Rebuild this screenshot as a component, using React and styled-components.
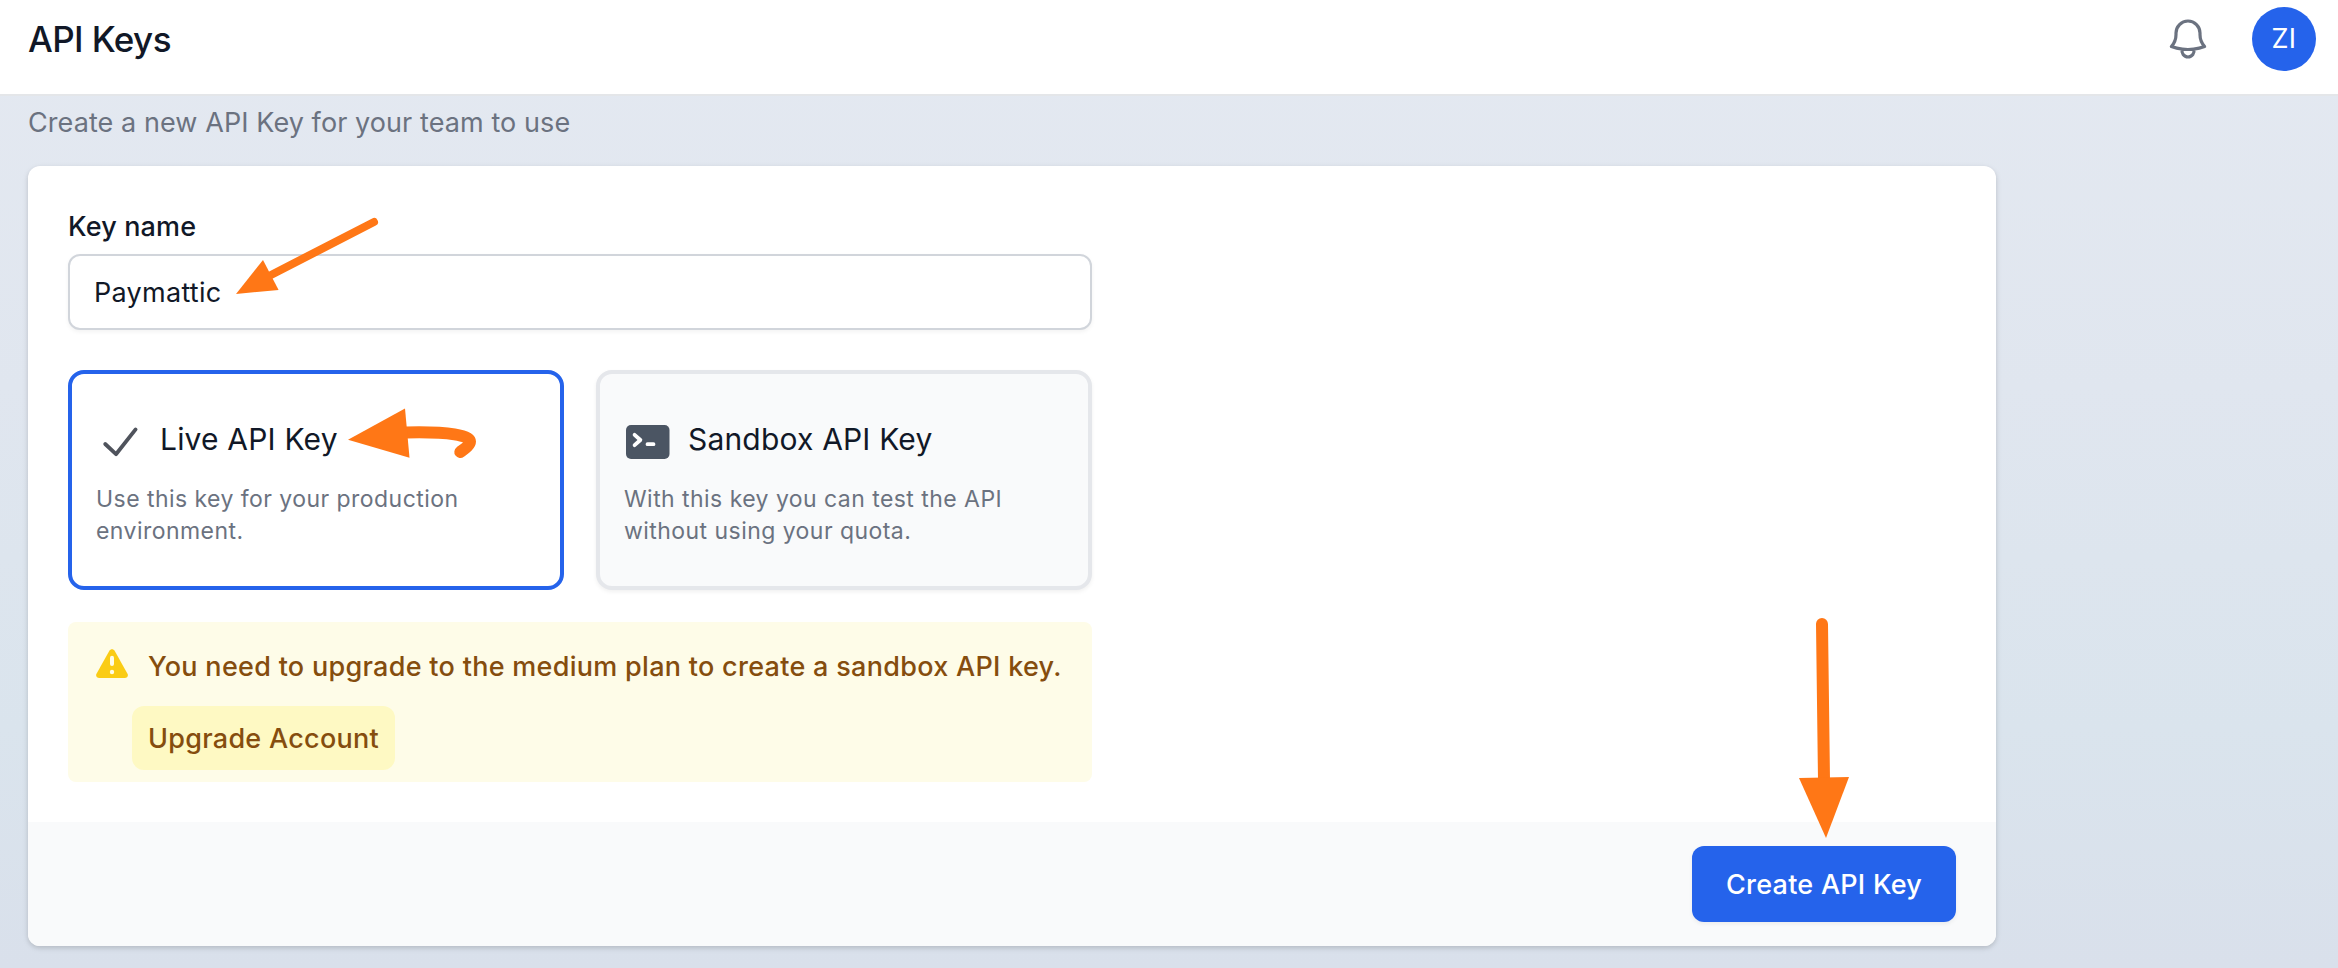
import React from "react";
import styled, { createGlobalStyle } from "styled-components";

const GlobalStyle = createGlobalStyle`
  *, *::before, *::after { box-sizing: border-box; }
  body { margin: 0; font-family: Inter, "Liberation Sans", sans-serif; }
  h1, p { margin: 0; }
  button, input { font-family: inherit; }
`;

const Page = styled.div`
  position: relative;
  width: 2338px;
  height: 968px;
  overflow: hidden;
  background: linear-gradient(180deg, #e4e9f1 0%, #e0e6ef 40%, #dae4ed 75%, #d9e0eb 100%);
`;

const Header = styled.header`
  display: flex;
  align-items: flex-start;
  justify-content: space-between;
  height: 96px;
  padding: 7px 22px 0 28px;
  background: #fff;
  border-bottom: 2px solid #e4e6e9;
`;

const Title = styled.h1`
  font-size: 35px;
  line-height: 64px;
  font-weight: 500;
  letter-spacing: -0.6px;
  color: #111827;
`;

const HeaderActions = styled.div`
  display: flex;
  align-items: center;
  gap: 40px;
`;

const Avatar = styled.div`
  width: 64px;
  height: 64px;
  border-radius: 50%;
  background: #2563eb;
  color: #fff;
  font-size: 27px;
  line-height: 64px;
  letter-spacing: 0.5px;
  text-align: center;
`;

const Main = styled.main`
  padding: 0 0 0 28px;
`;

const Intro = styled.p`
  height: 70px;
  padding-top: 7px;
  font-size: 27px;
  line-height: 40px;
  letter-spacing: 0.08px;
  color: #6b7280;
`;

const Panel = styled.section`
  width: 1968px;
  height: 780px;
  display: flex;
  flex-direction: column;
  border-radius: 12px;
  overflow: hidden;
  background: #fff;
  box-shadow: 0 2px 6px rgba(0, 0, 0, 0.1), 0 2px 4px rgba(0, 0, 0, 0.08);
`;

const PanelBody = styled.div`
  flex: 1;
  width: 1104px;
  padding: 40px;
`;

const Label = styled.label`
  display: block;
  height: 48px;
  font-size: 27px;
  line-height: 42px;
  font-weight: 500;
  letter-spacing: 0.15px;
  color: #111827;
`;

const Input = styled.input`
  display: block;
  width: 1024px;
  height: 76px;
  padding: 0 24px;
  border: 2px solid #d1d5db;
  border-radius: 12px;
  background: #fff;
  box-shadow: 0 2px 4px rgba(0, 0, 0, 0.05);
  font-size: 27px;
  letter-spacing: 0.28px;
  color: #111827;
  outline: none;
`;

const Options = styled.div`
  display: grid;
  grid-template-columns: 1fr 1fr;
  gap: 32px;
  margin-top: 40px;
`;

const Option = styled.div`
  height: 220px;
  padding: 40px 24px 0;
  border: 4px solid ${(p) => (p.$active ? "#2563eb" : "#e5e7eb")};
  border-radius: 16px;
  background: ${(p) => (p.$active ? "#fff" : "#f9fafb")};
  box-shadow: ${(p) => (p.$active ? "none" : "0 2px 4px rgba(0, 0, 0, 0.06)")};
`;

const OptionHead = styled.div`
  display: flex;
  align-items: center;
  gap: 16px;
  height: 48px;
`;

const OptionTitle = styled.div`
  padding-top: 2px;
  font-size: 30px;
  line-height: 48px;
  letter-spacing: 0.18px;
  color: #111827;
`;

const OptionText = styled.p`
  margin-top: 21px;
  font-size: 23px;
  line-height: 32px;
  letter-spacing: 0.45px;
  color: #6b7280;
`;

const Alert = styled.div`
  display: flex;
  gap: 16px;
  height: 160px;
  margin-top: 32px;
  padding: 22px 24px 0;
  border-radius: 8px;
  background: #fefce8;

  svg {
    flex-shrink: 0;
  }
`;

const AlertContent = styled.div`
  display: flex;
  flex-direction: column;
  align-items: flex-start;
`;

const AlertText = styled.p`
  height: 62px;
  font-size: 27px;
  line-height: 46px;
  font-weight: 500;
  letter-spacing: 0.29px;
  white-space: nowrap;
  color: #854d0e;
`;

const UpgradeButton = styled.button`
  width: 263px;
  height: 64px;
  margin-left: -16px;
  padding: 0 16px;
  border: 0;
  border-radius: 12px;
  background: #fef9c3;
  font-size: 27px;
  font-weight: 500;
  letter-spacing: 0.27px;
  text-align: left;
  white-space: nowrap;
  color: #854d0e;
`;

const PanelFooter = styled.footer`
  display: flex;
  justify-content: flex-end;
  height: 124px;
  padding: 24px 40px;
  background: #f9fafb;
`;

const PrimaryButton = styled.button`
  width: 264px;
  height: 76px;
  padding: 0;
  border: 0;
  border-radius: 12px;
  background: #2563eb;
  box-shadow: 0 2px 4px rgba(0, 0, 0, 0.06);
  font-size: 27px;
  font-weight: 500;
  letter-spacing: 0.25px;
  white-space: nowrap;
  color: #fff;
`;

const Annotations = styled.svg`
  position: absolute;
  inset: 0;
  pointer-events: none;
`;

const BellIcon = () => (
  <svg width="48" height="48" viewBox="0 0 24 24" fill="none" stroke="#6b7280" strokeWidth="1.6" strokeLinecap="round" strokeLinejoin="round">
    <path d="M14.857 17.082a23.848 23.848 0 005.454-1.31A8.967 8.967 0 0118 9.75v-.7V9A6 6 0 006 9v.75a8.967 8.967 0 01-2.312 6.022c1.733.64 3.56 1.085 5.455 1.31m5.714 0a24.255 24.255 0 01-5.714 0m5.714 0a3 3 0 11-5.714 0" />
  </svg>
);

const CheckIcon = () => (
  <svg width="48" height="48" viewBox="0 0 48 48" fill="none" stroke="#4f535c" strokeWidth="3.8" strokeLinecap="round" strokeLinejoin="round">
    <path d="M9.2 30L20 40.2L39.6 15.4" />
  </svg>
);

const TerminalIcon = () => (
  <svg width="48" height="48" viewBox="0 0 48 48" fill="none">
    <rect x="2" y="11" width="43.5" height="34" rx="5" fill="#4b5563" />
    <path d="M10.6 20.8L16.4 26L10.6 31.2M23.5 30.2H29.5" stroke="#fff" strokeWidth="3.8" strokeLinecap="round" strokeLinejoin="round" />
  </svg>
);

const WarningIcon = () => (
  <svg width="40" height="40" viewBox="0 0 40 40">
    <path d="M17.4 6.8C18.6 4.8 21.4 4.8 22.6 6.8L35.5 29.8C36.6 31.8 35.2 34 33 34H7C4.8 34 3.4 31.8 4.5 29.8Z" fill="#facc15" />
    <path d="M20 13.8V20" stroke="#fefce8" strokeWidth="4" strokeLinecap="round" />
    <circle cx="20" cy="28" r="2.2" fill="#fefce8" />
  </svg>
);

const ArrowOverlay = () => (
  <Annotations width="2338" height="968" viewBox="0 0 2338 968" fill="#ff7716" stroke="none">
    <path d="M374 222L271 275" stroke="#ff7716" strokeWidth="8" strokeLinecap="round" />
    <path d="M236 294L263 260L278.6 290Z" />
    <path d="M406 432.5C450 431.5 470 435.5 470 441.5C470 445 465 448.5 460.3 452" fill="none" stroke="#ff7716" strokeWidth="12" strokeLinecap="round" />
    <path d="M348 439.7L405 408.5L409.5 457.7Z" />
    <path d="M1822 624L1824 780" stroke="#ff7716" strokeWidth="12" strokeLinecap="round" />
    <path d="M1799 778L1849 777L1826 838Z" />
  </Annotations>
);

export default function App() {
  return (
    <Page>
      <GlobalStyle />
      <Header>
        <Title>API Keys</Title>
        <HeaderActions>
          <BellIcon />
          <Avatar>ZI</Avatar>
        </HeaderActions>
      </Header>
      <Main>
        <Intro>Create a new API Key for your team to use</Intro>
        <Panel>
          <PanelBody>
            <Label htmlFor="key-name">Key name</Label>
            <Input id="key-name" defaultValue="Paymattic" />
            <Options>
              <Option $active>
                <OptionHead>
                  <CheckIcon />
                  <OptionTitle>Live API Key</OptionTitle>
                </OptionHead>
                <OptionText>
                  Use this key for your production
                  <br />
                  environment.
                </OptionText>
              </Option>
              <Option>
                <OptionHead>
                  <TerminalIcon />
                  <OptionTitle>Sandbox API Key</OptionTitle>
                </OptionHead>
                <OptionText>
                  With this key you can test the API
                  <br />
                  without using your quota.
                </OptionText>
              </Option>
            </Options>
            <Alert>
              <WarningIcon />
              <AlertContent>
                <AlertText>You need to upgrade to the medium plan to create a sandbox API key.</AlertText>
                <UpgradeButton>Upgrade Account</UpgradeButton>
              </AlertContent>
            </Alert>
          </PanelBody>
          <PanelFooter>
            <PrimaryButton>Create API Key</PrimaryButton>
          </PanelFooter>
        </Panel>
      </Main>
      <ArrowOverlay />
    </Page>
  );
}
